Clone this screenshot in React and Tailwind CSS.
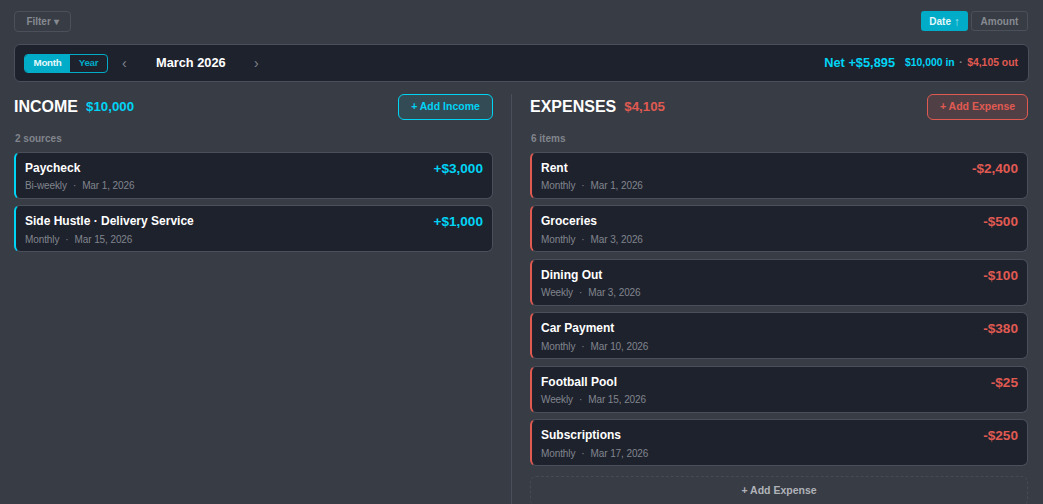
const income = [
  { name: "Paycheck", meta: "Bi-weekly", date: "Mar 1, 2026", amount: "+$3,000" },
  { name: "Side Hustle · Delivery Service", meta: "Monthly", date: "Mar 15, 2026", amount: "+$1,000" },
];

const expenses = [
  { name: "Rent", meta: "Monthly", date: "Mar 1, 2026", amount: "-$2,400" },
  { name: "Groceries", meta: "Monthly", date: "Mar 3, 2026", amount: "-$500" },
  { name: "Dining Out", meta: "Weekly", date: "Mar 3, 2026", amount: "-$100" },
  { name: "Car Payment", meta: "Monthly", date: "Mar 10, 2026", amount: "-$380" },
  { name: "Football Pool", meta: "Weekly", date: "Mar 15, 2026", amount: "-$25" },
  { name: "Subscriptions", meta: "Monthly", date: "Mar 17, 2026", amount: "-$250" },
];

function Row({ item, accent, amountColor }) {
  return (
    <div className={`flex h-[47px] justify-between rounded-md border border-[#4a4f5a] border-l-2 ${accent} bg-[#1e222d] pl-[9px] pr-[9px] pt-[8px]`}>
      <div>
        <div className="text-[12px] font-bold leading-[14px] text-white">{item.name}</div>
        <div className="mt-[4.5px] flex text-[10px] leading-[13px] tracking-[-0.1px] text-[#81858d]">
          <span>{item.meta}</span>
          <span className="mx-[6px]">·</span>
          <span>{item.date}</span>
        </div>
      </div>
      <div className={`text-[13.6px] font-bold leading-[15px] ${amountColor}`}>{item.amount}</div>
    </div>
  );
}

export default function App() {
  return (
    <div className="h-[504px] overflow-hidden bg-[#383c44] px-[14px] pt-[10px] font-['Liberation_Sans',Arial,sans-serif]">
      <div className="flex h-[22px] items-center justify-between pr-[1px]">
        <button className="h-[21px] w-[57px] rounded border border-[#4b505a] text-[10px] font-bold text-[#868a92]">Filter ▾</button>
        <div className="flex gap-[3px]">
          <button className="h-[20px] w-[47px] rounded-[3px] bg-[#00acc8] text-[10px] font-bold text-[#e4f8fb]">
            Date <span className="relative top-px text-[12px] font-normal text-[#a5e4ee]">↑</span>
          </button>
          <button className="h-[20px] w-[57px] rounded-[3px] border border-[#4b505a] text-[10px] font-bold text-[#868a92]">Amount</button>
        </div>
      </div>

      <div className="mt-[12px] flex h-[38px] items-center justify-between rounded-md border border-[#4a4f5a] bg-[#1e222d] pl-[9px] pr-[10px]">
        <div className="flex items-center">
          <div className="flex h-[19px] w-[84px] overflow-hidden rounded border border-[#00acc8] text-[9.8px] font-bold tracking-[-0.3px]">
            <div className="flex w-[45px] items-center justify-center bg-[#00acc8] text-[#e4f8fb]">Month</div>
            <div className="flex flex-1 items-center justify-center text-[#00acc8]">Year</div>
          </div>
          <span className="ml-[14px] w-[8px] text-[14px] text-[#81858d]">‹</span>
          <span className="ml-[26px] w-[90px] text-[12.8px] font-bold text-white">March 2026</span>
          <span className="ml-[8px] text-[14px] text-[#81858d]">›</span>
        </div>
        <div className="flex items-center font-bold">
          <span className="text-[12.8px] text-[#00d4f5]">Net +$5,895</span>
          <span className="ml-[10px] text-[10.4px] text-[#00d4f5]">$10,000 in</span>
          <span className="mx-[4.5px] text-[10.4px] text-[#81858d]">·</span>
          <span className="text-[10.4px] text-[#e05a52]">$4,105 out</span>
        </div>
      </div>

      <div className="mt-[12px] flex">
        <div className="w-[479px] shrink-0">
          <div className="flex h-[26px] items-center justify-between">
            <div className="flex items-center gap-[8px]">
              <h2 className="text-[16px] font-bold text-white">INCOME</h2>
              <span className="text-[13.3px] font-bold text-[#00d4f5]">$10,000</span>
            </div>
            <button className="h-[26px] w-[95px] rounded-md border border-[#00d4f5] bg-[#00d4f5]/10 text-[10.5px] font-bold text-[#00d4f5]">+ Add Income</button>
          </div>
          <p className="ml-px mt-[13px] text-[10px] font-bold leading-[12px] text-[#81858d]">2 sources</p>
          <div className="mt-[6.75px] flex flex-col gap-[6.5px]">
            {income.map((item) => (
              <Row key={item.name} item={item} accent="border-l-[#00d4f5]" amountColor="text-[#00d4f5]" />
            ))}
          </div>
        </div>

        <div className="ml-[18px] w-px shrink-0 bg-[#4a4f5a]" />

        <div className="ml-[18px] flex-1 pr-px">
          <div className="flex h-[26px] items-center justify-between">
            <div className="flex items-center gap-[8px]">
              <h2 className="text-[16px] font-bold text-white">EXPENSES</h2>
              <span className="text-[13.3px] font-bold text-[#e05a52]">$4,105</span>
            </div>
            <button className="h-[26px] w-[101px] rounded-md border border-[#e05a52] bg-[#e05a52]/15 text-[10.5px] font-bold text-[#e05a52]">+ Add Expense</button>
          </div>
          <p className="ml-px mt-[13px] text-[10px] font-bold leading-[12px] text-[#81858d]">6 items</p>
          <div className="mt-[6.75px] flex flex-col gap-[6.5px]">
            {expenses.map((item) => (
              <Row key={item.name} item={item} accent="border-l-[#e05a52]" amountColor="text-[#e05a52]" />
            ))}
          </div>
          <button className="mt-[9.5px] h-[30px] w-full rounded-md border border-dashed border-[#454a54] text-[10.5px] font-bold text-[#b0b3b9]">+ Add Expense</button>
        </div>
      </div>
    </div>
  );
}
